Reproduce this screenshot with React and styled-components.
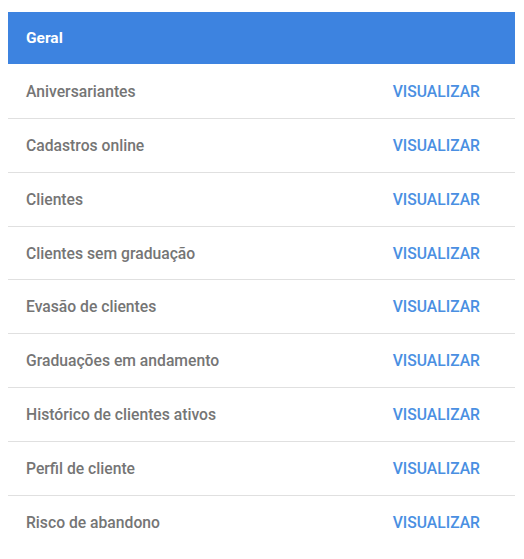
import styled, { createGlobalStyle } from 'styled-components';

const GlobalStyle = createGlobalStyle`
  body {
    margin: 8px;
    background: #fff;
    font-family: Roboto, "Liberation Sans", sans-serif;
  }
`;

const reports = [
  'Aniversariantes',
  'Cadastros online',
  'Clientes',
  'Clientes sem graduação',
  'Evasão de clientes',
  'Graduações em andamento',
  'Histórico de clientes ativos',
  'Perfil de cliente',
  'Risco de abandono',
];

const Card = styled.section`
  margin: 4px 1px 0 0;
  background: #fff;
`;

const Header = styled.header`
  display: flex;
  align-items: center;
  height: 52px;
  padding: 0 18px;
  background: #3d83e0;
  color: #fff;
  font-size: 15.5px;
  font-weight: 700;
`;

const List = styled.ul`
  list-style: none;
  margin: 1px 0 0;
  padding: 0;
`;

const Row = styled.li`
  display: flex;
  align-items: center;
  justify-content: space-between;
  height: 52.86px;
  padding: 0 35px 0 18px;
  border-bottom: ${({ $last }) => ($last ? 'none' : '1px solid #e0e0e0')};
`;

const Label = styled.span`
  color: #757575;
  font-size: 15.7px;
  font-weight: 500;
`;

const ViewButton = styled.button`
  border: none;
  background: none;
  padding: 0;
  color: #4a8fe2;
  font-family: inherit;
  font-size: 15.7px;
  font-weight: 500;
  cursor: pointer;
`;

export default function App() {
  return (
    <>
      <GlobalStyle />
      <Card>
        <Header>Geral</Header>
        <List>
          {reports.map((name, i) => (
            <Row key={name} $last={i === reports.length - 1}>
              <Label>{name}</Label>
              <ViewButton>VISUALIZAR</ViewButton>
            </Row>
          ))}
        </List>
      </Card>
    </>
  );
}
